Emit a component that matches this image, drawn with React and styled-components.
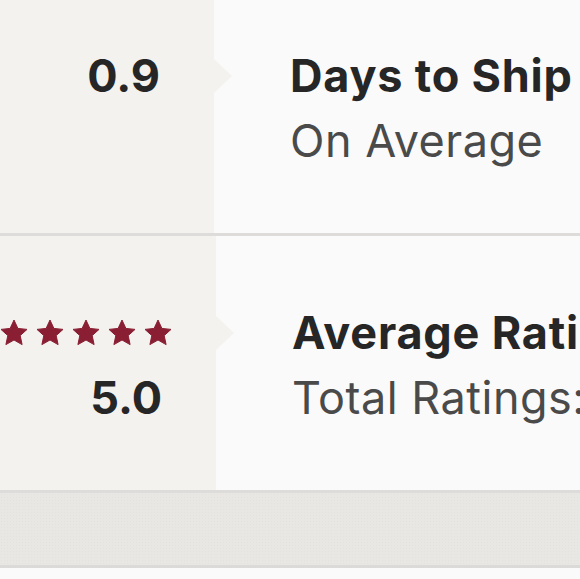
import React from 'react';
import styled, { createGlobalStyle } from 'styled-components';

const GlobalStyle = createGlobalStyle`
  html, body {
    margin: 0;
    padding: 0;
    background: #fafafa;
    overflow: hidden;
  }
  body {
    font-family: Inter, Lato, "Liberation Sans", sans-serif;
  }
`;

const Page = styled.div`
  width: 580px;
  height: 579px;
  overflow: hidden;
  background: #fafafa;
`;

const List = styled.div`
  margin-top: -21px;
`;

const Row = styled.div`
  display: flex;
  height: 254px;
  border-bottom: 3px solid #dddcda;
`;

const Side = styled.div`
  position: relative;
  flex: 0 0 214px;
  box-sizing: border-box;
  background: #f4f2ee;
  padding: 64px 54px 0 0;
  display: flex;
  flex-direction: column;
  align-items: flex-end;

  &:after {
    content: '';
    position: absolute;
    top: 80px;
    right: -18px;
    border-top: 17px solid transparent;
    border-bottom: 17px solid transparent;
    border-left: 18px solid #f4f2ee;
  }
`;

const Line = styled.div`
  height: 65px;
  line-height: 65px;
  font-size: 45px;
  white-space: nowrap;
`;

const Value = styled(Line)`
  font-weight: 700;
  color: #262626;
`;

const Stars = styled.div`
  height: 65px;
  display: flex;
  align-items: center;
  gap: 8px;
  margin-right: -10px;
`;

const Main = styled.div`
  flex: 1;
  min-width: 0;
  padding: 64px 0 0 76px;
  overflow: hidden;
`;

const Title = styled(Line)`
  font-weight: 700;
  color: #262626;
  letter-spacing: 0.8px;
`;

const Sub = styled(Line)`
  font-weight: 400;
  color: #4a4a4a;
  letter-spacing: 0.5px;
`;

const Band = styled.div`
  height: 72px;
  border-bottom: 3px solid #dbdad8;
  background-color: #e9e7e4;
  background-image: radial-gradient(rgba(0, 0, 0, 0.025) 1px, transparent 1px);
  background-size: 3px 3px;
`;

function Star() {
  return (
    <svg width="28" height="27" viewBox="0 0 28 27">
      <path
        d="M14 1l3.9 8.4 9.1 1-6.8 6.2 1.9 9-8.1-4.6-8.1 4.6 1.9-9L1 10.4l9.1-1z"
        fill="#8a1f33"
        stroke="#8a1f33"
        strokeWidth="1"
        strokeLinejoin="round"
      />
    </svg>
  );
}

const stats = [
  { value: '0.9', title: 'Days to Ship', sub: 'On Average' },
  { value: '5.0', title: 'Average Rating', sub: 'Total Ratings: 12', stars: 5 },
];

export default function App() {
  return (
    <Page>
      <GlobalStyle />
      <List>
        {stats.map(s => (
          <Row key={s.title}>
            <Side>
              {s.stars && (
                <Stars>
                  {Array.from({ length: s.stars }).map((_, i) => <Star key={i} />)}
                </Stars>
              )}
              <Value>{s.value}</Value>
            </Side>
            <Main>
              <Title>{s.title}</Title>
              <Sub>{s.sub}</Sub>
            </Main>
          </Row>
        ))}
      </List>
      <Band />
    </Page>
  );
}
